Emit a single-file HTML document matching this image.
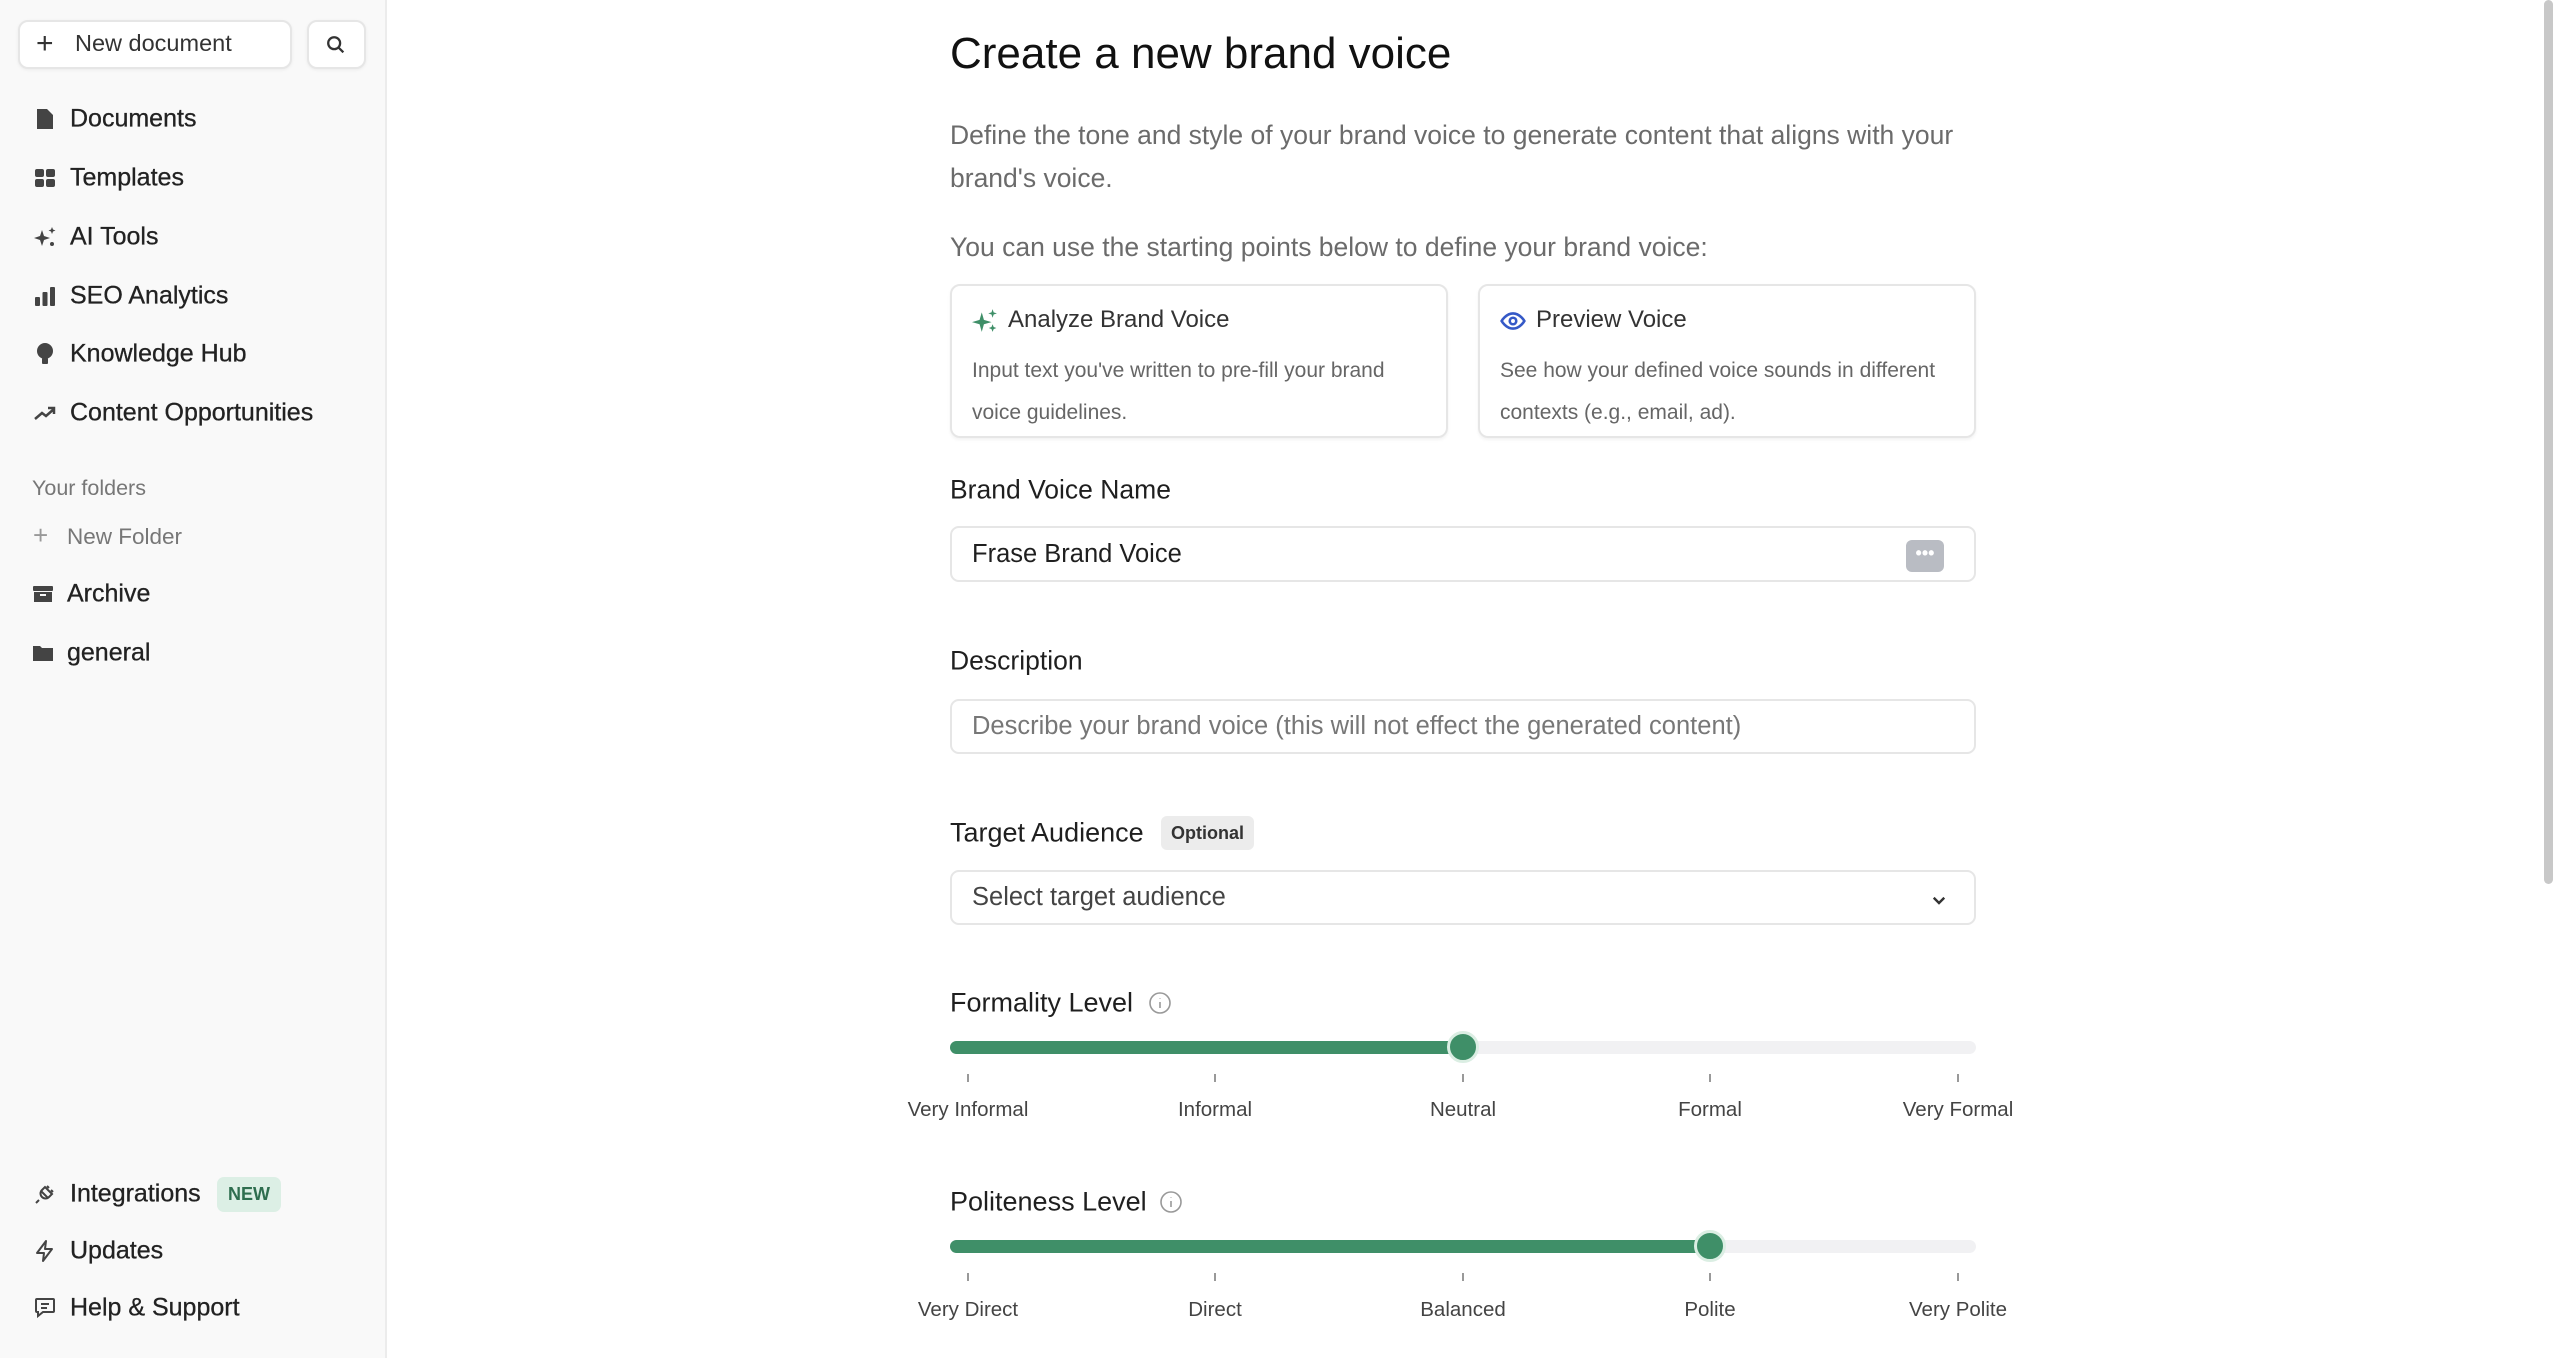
<!DOCTYPE html>
<html><head><meta charset="utf-8"><style>
*{box-sizing:border-box;margin:0;padding:0}
body{width:2560px;height:1358px;overflow:hidden;background:#fff;font-family:"Liberation Sans",Arial,sans-serif;color:#1a1a1a;position:relative}
.sb{position:absolute;left:0;top:0;width:387px;height:1358px;background:#f9f9f9;border-right:2px solid #ececec}
.abs{position:absolute}
.btn{position:absolute;background:#fff;border:2px solid #e6e6e6;border-radius:10px;box-shadow:0 1px 3px rgba(0,0,0,.06)}
.nav{position:absolute;left:70px;font-size:25px;color:#222;transform:translateY(-50%);-webkit-text-stroke:.3px #222}
.ic{position:absolute;left:33px;width:24px;height:24px;transform:translateY(-50%)}
.main{position:absolute;left:950px}
.lbl{position:absolute;left:950px;font-size:26.5px;color:#1f1f1f;transform:translateY(-50%)}
.inp{position:absolute;left:950px;width:1026px;border:2px solid #e6e6e6;border-radius:9px;background:#fff;font-size:25.5px;padding-left:20px;display:flex;align-items:center}
.card{position:absolute;top:284px;width:498px;height:154px;border:2px solid #e6e6e6;border-radius:10px;box-shadow:0 2px 3px rgba(0,0,0,.05);padding:0 20px}
.card h3{position:absolute;top:20px;left:56px;font-size:24px;font-weight:normal;color:#333}
.card p{position:absolute;top:64px;left:20px;right:16px;font-size:21px;line-height:42px;color:#666}
.track{position:absolute;left:950px;width:1026px;height:13px;border-radius:7px;background:#f1f1f3}
.fill{position:absolute;left:0;top:0;height:13px;border-radius:7px;background:#3f8f68}
.thumb{position:absolute;width:32px;height:32px;border-radius:50%;background:#3f8f68;border:3px solid #dbeee3;top:-10px}
.tick{position:absolute;width:2px;height:8px;background:#999}
.tl{position:absolute;font-size:20.5px;color:#444;transform:translateX(-50%);white-space:nowrap}
</style></head><body>
<div class="sb">
 <div class="btn" style="left:18px;top:20px;width:274px;height:49px"></div>
 <div class="abs" style="left:36px;top:27px;font-size:30px;color:#333;font-weight:300">+</div>
 <div class="abs" style="left:75px;top:30px;font-size:23.5px;color:#333">New document</div>
 <div class="btn" style="left:307px;top:20px;width:59px;height:49px"></div>
 <svg class="abs" style="left:325px;top:34px" width="22" height="22" viewBox="0 0 24 24" fill="none" stroke="#333" stroke-width="2.5"><circle cx="10" cy="10" r="6.5"/><path d="M15 15l5 5"/></svg>

 <svg class="ic" style="top:119px" viewBox="0 0 24 24" fill="#444"><path d="M4 2h10l6 6v14H4z"/></svg>
 <div class="nav" style="top:119px">Documents</div>
 <svg class="ic" style="top:178px" viewBox="0 0 24 24" fill="#444"><rect x="2" y="3" width="9" height="8" rx="2"/><rect x="13" y="3" width="9" height="8" rx="2"/><rect x="2" y="13" width="9" height="8" rx="2"/><rect x="13" y="13" width="9" height="8" rx="2"/></svg>
 <div class="nav" style="top:178px">Templates</div>
 <svg class="ic" style="top:237px" viewBox="0 0 24 24" fill="#444"><path d="M9 5l2 6 6 2-6 2-2 6-2-6-6-2 6-2z"/><path d="M19 2l1 2.5 2.5 1-2.5 1-1 2.5-1-2.5-2.5-1 2.5-1z"/><circle cx="19" cy="19" r="2"/></svg>
 <div class="nav" style="top:237px">AI Tools</div>
 <svg class="ic" style="top:296px" viewBox="0 0 24 24" fill="#444"><rect x="2" y="13" width="5" height="9" rx="1"/><rect x="9.5" y="8" width="5" height="14" rx="1"/><rect x="17" y="3" width="5" height="19" rx="1"/></svg>
 <div class="nav" style="top:296px">SEO Analytics</div>
 <svg class="ic" style="top:354px" viewBox="0 0 24 24" fill="#444"><circle cx="12" cy="9" r="8"/><rect x="9" y="16" width="6" height="6" rx="1"/></svg>
 <div class="nav" style="top:354px">Knowledge Hub</div>
 <svg class="ic" style="top:413px" viewBox="0 0 24 24" fill="none" stroke="#444" stroke-width="2.5"><path d="M2 18l7-6 4 3 8-7M15 7h6v6"/></svg>
 <div class="nav" style="top:413px">Content Opportunities</div>

 <div class="abs" style="left:32px;top:476px;font-size:21.5px;color:#777">Your folders</div>
 <div class="abs" style="left:33px;top:520px;font-size:26px;color:#999;font-weight:300">+</div>
 <div class="abs" style="left:67px;top:524px;font-size:22.5px;color:#777">New Folder</div>
 <svg class="ic" style="top:594px;left:31px" viewBox="0 0 24 24" fill="#444"><rect x="2" y="4" width="20" height="5" rx="1"/><path d="M3 10h18v10H3z"/><rect x="9" y="12" width="6" height="2" fill="#f9f9f9"/></svg>
 <div class="nav" style="top:594px;left:67px">Archive</div>
 <svg class="ic" style="top:653px;left:31px" viewBox="0 0 24 24" fill="#444"><path d="M2 5h7l2 2h11v13H2z"/></svg>
 <div class="nav" style="top:653px;left:67px">general</div>

 <svg class="ic" style="top:1194px" viewBox="0 0 24 24" fill="none" stroke="#444" stroke-width="2"><path d="M6 18l-3 3M8 9l7 7M9 8l3-3 7 7-3 3c-2 2-5 2-7 0s-2-5 0-7zM14 4l2 2M20 10l-2-2"/></svg>
 <div class="nav" style="top:1194px">Integrations</div>
 <div class="abs" style="left:217px;top:1177px;width:64px;height:35px;background:#dcefe5;border-radius:7px;color:#2e6e4f;font-size:18px;font-weight:bold;display:flex;align-items:center;justify-content:center">NEW</div>
 <svg class="ic" style="top:1251px" viewBox="0 0 24 24" fill="none" stroke="#444" stroke-width="2" stroke-linejoin="round"><path d="M13 2L4 14h7l-1 8 9-12h-7z"/></svg>
 <div class="nav" style="top:1251px">Updates</div>
 <svg class="ic" style="top:1308px" viewBox="0 0 24 24" fill="none" stroke="#444" stroke-width="2"><path d="M4 3h16a1 1 0 0 1 1 1v11a1 1 0 0 1-1 1H10l-5 4v-4H4a1 1 0 0 1-1-1V4a1 1 0 0 1 1-1zM8 8h8M8 12h6"/></svg>
 <div class="nav" style="top:1308px">Help &amp; Support</div>
</div>

<div class="main" style="top:29px;font-size:44px;color:#111">Create a new brand voice</div>
<div class="main" style="top:114px;width:1060px;font-size:26.5px;line-height:43px;color:#6b6b6b">Define the tone and style of your brand voice to generate content that aligns with your brand's voice.</div>
<div class="main" style="top:232px;font-size:26.5px;color:#6b6b6b">You can use the starting points below to define your brand voice:</div>

<div class="card" style="left:950px">
 <svg class="abs" style="left:20px;top:22px" width="26" height="26" viewBox="0 0 24 24" fill="#3f8f68"><path d="M9 4l2 7 7 2-7 2-2 7-2-7-7-2 7-2z"/><path d="M19 1l1 3 3 1-3 1-1 3-1-3-3-1 3-1z"/><path d="M19 15l1 2.5 2.5 1-2.5 1-1 2.5-1-2.5-2.5-1 2.5-1z"/></svg>
 <h3>Analyze Brand Voice</h3>
 <p>Input text you've written to pre-fill your brand voice guidelines.</p>
</div>
<div class="card" style="left:1478px">
 <svg class="abs" style="left:20px;top:22px" width="26" height="26" viewBox="0 0 24 24" fill="none" stroke="#3559c7" stroke-width="2.4"><path d="M1.5 12S5.5 5 12 5s10.5 7 10.5 7-4 7-10.5 7S1.5 12 1.5 12z"/><circle cx="12" cy="12" r="3"/></svg>
 <h3>Preview Voice</h3>
 <p>See how your defined voice sounds in different contexts (e.g., email, ad).</p>
</div>

<div class="lbl" style="top:490px">Brand Voice Name</div>
<div class="inp" style="top:526px;height:56px;color:#1f1f1f">Frase Brand Voice
 <div class="abs" style="right:30px;top:12px;width:38px;height:32px;background:#b9bcc3;border-radius:6px;color:#fff;font-size:18px;font-weight:bold;text-align:center;line-height:26px">•••</div>
</div>

<div class="lbl" style="top:661px">Description</div>
<div class="inp" style="top:699px;height:55px;color:#777">Describe your brand voice (this will not effect the generated content)</div>

<div class="lbl" style="top:833px;font-size:27px">Target Audience</div>
<div class="abs" style="left:1161px;top:816px;width:93px;height:34px;background:#ececec;border-radius:6px;font-size:18px;font-weight:bold;color:#333;display:flex;align-items:center;justify-content:center">Optional</div>
<div class="inp" style="top:870px;height:55px;color:#444">Select target audience
 <svg class="abs" style="right:26px;top:19px" width="18" height="18" viewBox="0 0 24 24" fill="none" stroke="#333" stroke-width="3.2"><path d="M5 9l7 7 7-7"/></svg>
</div>

<div class="lbl" style="top:1003px;font-size:27px">Formality Level</div>
<svg class="abs" style="left:1148px;top:991px" width="24" height="24" viewBox="0 0 24 24" fill="none" stroke="#999" stroke-width="1.6"><circle cx="12" cy="12" r="10"/><path d="M12 11v6M12 7.5v.5"/></svg>
<div class="track" style="top:1041px"><div class="fill" style="width:513px"></div><div class="thumb" style="left:497px"></div></div>
<div class="tick" style="left:967px;top:1074px"></div><div class="tick" style="left:1214px;top:1074px"></div><div class="tick" style="left:1462px;top:1074px"></div><div class="tick" style="left:1709px;top:1074px"></div><div class="tick" style="left:1957px;top:1074px"></div>
<div class="tl" style="left:968px;top:1098px">Very Informal</div><div class="tl" style="left:1215px;top:1098px">Informal</div><div class="tl" style="left:1463px;top:1098px">Neutral</div><div class="tl" style="left:1710px;top:1098px">Formal</div><div class="tl" style="left:1958px;top:1098px">Very Formal</div>

<div class="lbl" style="top:1202px;font-size:27px">Politeness Level</div>
<svg class="abs" style="left:1159px;top:1190px" width="24" height="24" viewBox="0 0 24 24" fill="none" stroke="#999" stroke-width="1.6"><circle cx="12" cy="12" r="10"/><path d="M12 11v6M12 7.5v.5"/></svg>
<div class="track" style="top:1240px"><div class="fill" style="width:760px"></div><div class="thumb" style="left:744px"></div></div>
<div class="tick" style="left:967px;top:1273px"></div><div class="tick" style="left:1214px;top:1273px"></div><div class="tick" style="left:1462px;top:1273px"></div><div class="tick" style="left:1709px;top:1273px"></div><div class="tick" style="left:1957px;top:1273px"></div>
<div class="tl" style="left:968px;top:1298px">Very Direct</div><div class="tl" style="left:1215px;top:1298px">Direct</div><div class="tl" style="left:1463px;top:1298px">Balanced</div><div class="tl" style="left:1710px;top:1298px">Polite</div><div class="tl" style="left:1958px;top:1298px">Very Polite</div>

<div class="abs" style="left:2544px;top:0;width:9px;height:884px;background:#c8c8c8;border-radius:5px"></div>
</body></html>
